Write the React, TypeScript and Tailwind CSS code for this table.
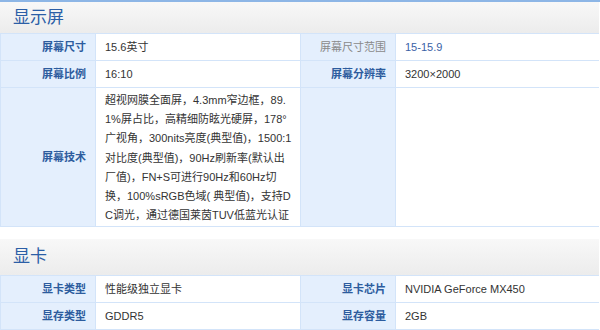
import React from "react";

const font = { fontFamily: '"Liberation Sans", Arial, "Noto Sans CJK SC", sans-serif' };

function Label({ children, muted }: { children?: React.ReactNode; muted?: boolean }) {
  return (
    <div
      className={
        "bg-[#e4effd] flex items-center justify-end pr-[9px] text-[11px] " +
        (muted ? "text-[#8a8a8a]" : "text-[#2d5c9e] font-bold")
      }
    >
      {children}
    </div>
  );
}

function Value({ children, link }: { children?: React.ReactNode; link?: boolean }) {
  return (
    <div
      className={
        "bg-white flex items-center pl-[9px] text-[11px] " + (link ? "text-[#3a62a6]" : "text-[#333333]")
      }
    >
      {children}
    </div>
  );
}

function Header({ title, className }: { title: string; className?: string }) {
  return (
    <div
      className={
        "bg-gradient-to-b from-[#f8f8f8] to-[#ececec] flex items-center pl-[13px] text-[17px] text-[#2b5ea6] w-[599px] " +
        (className || "")
      }
    >
      {title}
    </div>
  );
}

const techLines = [
  "超视网膜全面屏，4.3mm窄边框，89.",
  "1%屏占比，高精细防眩光硬屏，178°",
  "广视角，300nits亮度(典型值)，1500:1",
  "对比度(典型值)，90Hz刷新率(默认出",
  "厂值)，FN+S可进行90Hz和60Hz切",
  "换，100%sRGB色域( 典型值)，支持D",
  "C调光，通过德国莱茵TUV低蓝光认证",
];

export default function App() {
  return (
    <div className="w-[600px] h-[330px] overflow-hidden bg-white" style={font}>
      <div className="h-[2px] bg-[#8db6e6] w-full" />
      <Header title="显示屏" className="h-[31px]" />
      <div className="grid grid-cols-[94px_204px_94px_203px] grid-rows-[26px_26px_138px] gap-px bg-[#d3e4f9] p-px w-[599px]">
        <Label>屏幕尺寸</Label>
        <Value>15.6英寸</Value>
        <Label muted>屏幕尺寸范围</Label>
        <Value link>15-15.9</Value>

        <Label>屏幕比例</Label>
        <Value>16:10</Value>
        <Label>屏幕分辨率</Label>
        <Value>3200×2000</Value>

        <Label>屏幕技术</Label>
        <div className="bg-white pl-[9px] pt-[3px] text-[11px] leading-[19.2px] text-[#333333]">
          {techLines.map((l, i) => (
            <div key={i} className="whitespace-nowrap">
              {l}
            </div>
          ))}
        </div>
        <Label />
        <Value />
      </div>
      <div className="h-[12px]" />
      <Header title="显卡" className="h-[36px]" />
      <div className="grid grid-cols-[94px_204px_94px_203px] grid-rows-[26px_26px] gap-px bg-[#d3e4f9] p-px w-[599px]">
        <Label>显卡类型</Label>
        <Value>性能级独立显卡</Value>
        <Label>显卡芯片</Label>
        <Value>NVIDIA GeForce MX450</Value>

        <Label>显存类型</Label>
        <Value>GDDR5</Value>
        <Label>显存容量</Label>
        <Value>2GB</Value>
      </div>
    </div>
  );
}
